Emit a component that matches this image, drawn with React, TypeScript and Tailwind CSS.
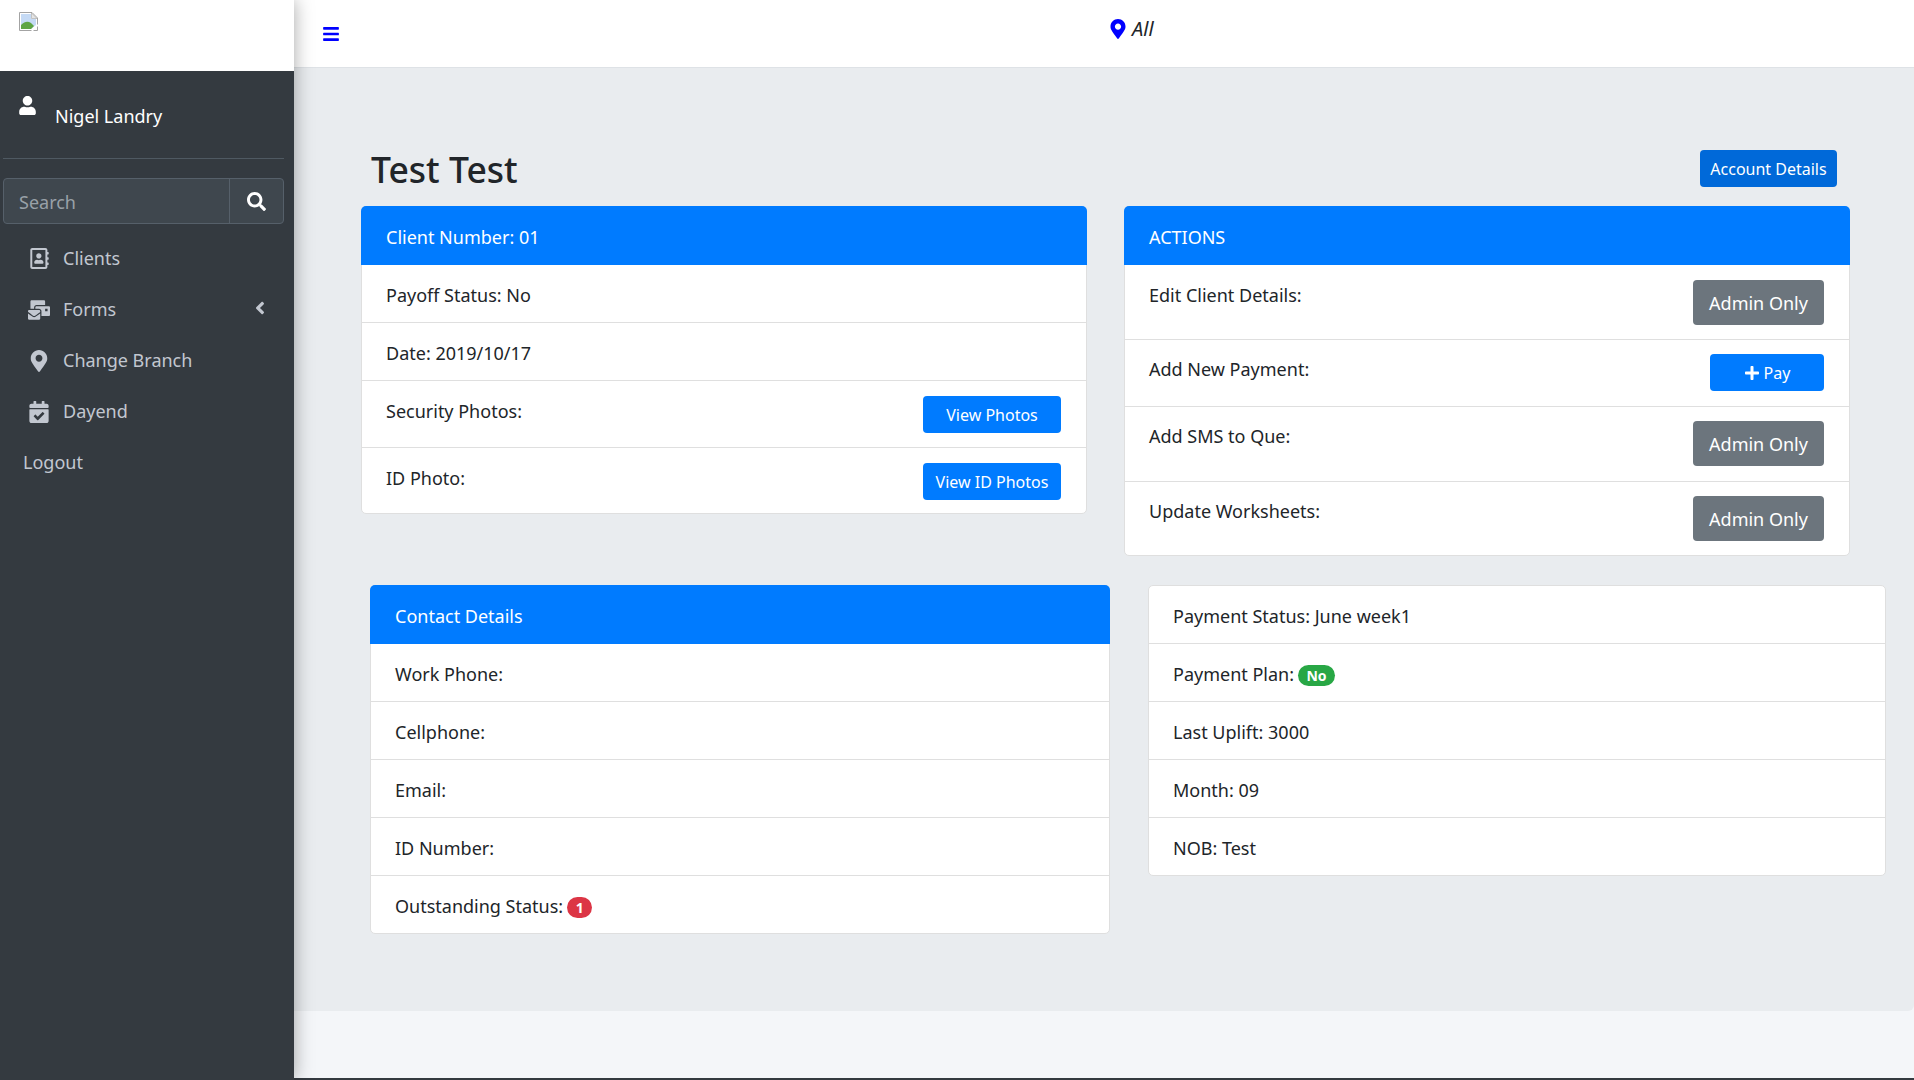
import type { ReactNode } from "react";
import {
    FaAngleLeft,
    FaBars,
    FaCalendarCheck,
    FaMailBulk,
    FaMapMarkerAlt,
    FaPlus,
    FaRegAddressBook,
    FaSearch,
    FaUser,
} from "react-icons/fa";

const navItems = [
    { label: "Clients", icon: <FaRegAddressBook className="text-[21px]" /> },
    { label: "Forms", icon: <FaMailBulk className="text-[22px]" />, arrow: true },
    { label: "Change Branch", icon: <FaMapMarkerAlt className="text-[22px]" /> },
    { label: "Dayend", icon: <FaCalendarCheck className="text-[22px]" /> },
];

function BrokenImage() {
    return (
        <svg width="19" height="19" viewBox="0 0 19 19">
            <path d="M0.5 0.5H13L18.5 6V18.5H0.5Z" fill="#fff" stroke="#a3a3a3" />
            <path d="M2 2H12V7H17V13L12 17H2Z" fill="#c5daf5" />
            <path d="M2 17V13C6 9 9 9 12 11L15 14L12 17Z" fill="#5fa544" />
            <path d="M12.5 6.5V1L18 6.5Z" fill="#e5e5e5" stroke="#a3a3a3" strokeWidth="0.6" />
            <path d="M12 19L19 12V14L14 19Z" fill="#fff" />
        </svg>
    );
}

function Sidebar() {
    return (
        <aside className="w-[294px] shrink-0 bg-[#343a40] shadow-[0_0_18px_rgba(0,0,0,0.35)] z-10 flex flex-col">
            <div className="h-[71px] bg-white pl-[19px] pt-[12px]">
                <BrokenImage />
            </div>
            <div className="h-[88px] mx-[3px] w-[281px] border-b border-[#4f5962] flex pl-[15px] pt-[25px]">
                <FaUser className="text-white text-[19px]" />
                <span className="ml-[18px] mt-[7px] text-white text-[18px] leading-[27px]">Nigel Landry</span>
            </div>
            <div className="mt-[19px] ml-[3px] w-[281px] h-[46px] flex rounded-[4px] border border-[#56606a] bg-[#3f474e]">
                <input
                    placeholder="Search"
                    className="w-[225px] min-w-0 pl-[15px] pt-[3px] text-[18px] bg-transparent outline-none placeholder:text-[#99a1a8]"
                />
                <div className="flex-1 border-l border-[#56606a] flex items-center justify-center text-white">
                    <FaSearch className="text-[19px]" />
                </div>
            </div>
            <nav className="mt-[9px] flex flex-col text-[18px] text-[#c2c7d0]">
                {navItems.map((item) => (
                    <div key={item.label} className="h-[51px] flex items-center relative">
                        <div className="w-[63px] pl-[15px] flex justify-center shrink-0">{item.icon}</div>
                        <span>{item.label}</span>
                        {item.arrow && <FaAngleLeft className="absolute left-[250px] top-[14px] text-[20px]" />}
                    </div>
                ))}
                <div className="h-[51px] flex items-center pl-[23px]">Logout</div>
            </nav>
        </aside>
    );
}

function Card({ title, children, className }: { title?: string; children: ReactNode; className: string }) {
    return (
        <div className={`bg-white rounded-[5px] border border-[#dfdfdf] ${className}`}>
            {title && (
                <div className="h-[59px] -mx-px -mt-px rounded-t-[5px] bg-[#007bff] text-white flex items-center px-[25px] pt-[4px]">
                    {title}
                </div>
            )}
            {children}
        </div>
    );
}

function Row({
    children,
    action,
    height = "h-[58px]",
    top = "pt-[15px]",
    first,
}: {
    children: ReactNode;
    action?: ReactNode;
    height?: string;
    top?: string;
    first?: boolean;
}) {
    return (
        <div className={`${height} ${top} ${first ? "" : "border-t border-[#dfdfdf]"} flex justify-between items-start pl-[24px] pr-[25px]`}>
            <div className="leading-[27px] flex items-center mt-[2px]">{children}</div>
            {action}
        </div>
    );
}

function Badge({ color, width, children }: { color: string; width: string; children: ReactNode }) {
    return (
        <span className={`${color} ${width} h-[21px] ml-[4px] mt-[1px] rounded-full text-white text-[14px] font-bold flex items-center justify-center`}>
            {children}
        </span>
    );
}

function BlueButton({ children }: { children: ReactNode }) {
    return (
        <button type="button" className="w-[138px] h-[37px] bg-[#007bff] text-white rounded-[4px] text-[16px]">
            {children}
        </button>
    );
}

function AdminOnly() {
    return (
        <button type="button" className="w-[131px] h-[45px] bg-[#6c757d] text-white rounded-[4px] text-[18px] pt-px">
            Admin Only
        </button>
    );
}

export default function App() {
    return (
        <div className="h-[1080px] w-[1914px] flex overflow-hidden bg-[#f4f6f9] text-[18px] text-[#212529] font-['Noto_Sans',sans-serif]">
            <Sidebar />
            <div className="flex-1 min-w-0 flex flex-col">
                <header className="h-[68px] bg-white border-b border-[#dee2e6] relative flex items-center shrink-0">
                    <FaBars className="ml-[28px] text-[#0000ff] text-[18px]" />
                    <div className="absolute left-[814px] top-[14px] flex items-center gap-[4px] italic text-[20px]">
                        <FaMapMarkerAlt className="text-[#0000ff] text-[20px]" />
                        <span>All</span>
                    </div>
                </header>
                <main className="h-[943px] shrink-0 bg-[#e9ecef] rounded-br-[6px]">
                    <div className="ml-[77px] w-[1466px] mt-[82px] h-[56px] flex items-start justify-between">
                        <h1 className="text-[35.5px] leading-[45px] font-medium mt-[-3px]">Test Test</h1>
                        <button type="button" className="w-[137px] h-[37px] bg-[#0069d9] text-white rounded-[4px] text-[16px]">
                            Account Details
                        </button>
                    </div>
                    <div className="ml-[67px] flex items-start gap-[37px]">
                        <Card title="Client Number: 01" className="w-[726px]">
                            <Row first height="h-[57px]">Payoff Status: No</Row>
                            <Row>Date: 2019/10/17</Row>
                            <Row height="h-[67px]" action={<BlueButton>View Photos</BlueButton>}>Security Photos:</Row>
                            <Row height="h-[66px]" action={<BlueButton>View ID Photos</BlueButton>}>ID Photo:</Row>
                        </Card>
                        <Card title="ACTIONS" className="w-[726px]">
                            <Row first height="h-[74px]" action={<AdminOnly />}>Edit Client Details:</Row>
                            <Row
                                height="h-[67px]"
                                top="pt-[14px]"
                                action={
                                    <button type="button" className="w-[114px] h-[37px] bg-[#007bff] text-white rounded-[4px] text-[16px] flex items-center justify-center gap-[4px]">
                                        <FaPlus className="text-[16px]" /> Pay
                                    </button>
                                }
                            >
                                Add New Payment:
                            </Row>
                            <Row height="h-[75px]" top="pt-[14px]" action={<AdminOnly />}>Add SMS to Que:</Row>
                            <Row height="h-[74px]" top="pt-[14px]" action={<AdminOnly />}>Update Worksheets:</Row>
                        </Card>
                    </div>
                    <div className="ml-[76px] mt-[29px] flex items-start gap-[38px]">
                        <Card title="Contact Details" className="w-[740px]">
                            <Row first height="h-[57px]">Work Phone:</Row>
                            <Row>Cellphone:</Row>
                            <Row>Email:</Row>
                            <Row>ID Number:</Row>
                            <Row>
                                Outstanding Status:
                                <Badge color="bg-[#dc3545]" width="w-[25px]">1</Badge>
                            </Row>
                        </Card>
                        <Card className="w-[738px]">
                            <Row first height="h-[57px]">Payment Status: June week1</Row>
                            <Row>
                                Payment Plan:
                                <Badge color="bg-[#28a745]" width="w-[37px]">No</Badge>
                            </Row>
                            <Row>Last Uplift: 3000</Row>
                            <Row>Month: 09</Row>
                            <Row>NOB: Test</Row>
                        </Card>
                    </div>
                </main>
                <footer className="flex-1 border-b-2 border-[#343a40]" />
            </div>
        </div>
    );
}
